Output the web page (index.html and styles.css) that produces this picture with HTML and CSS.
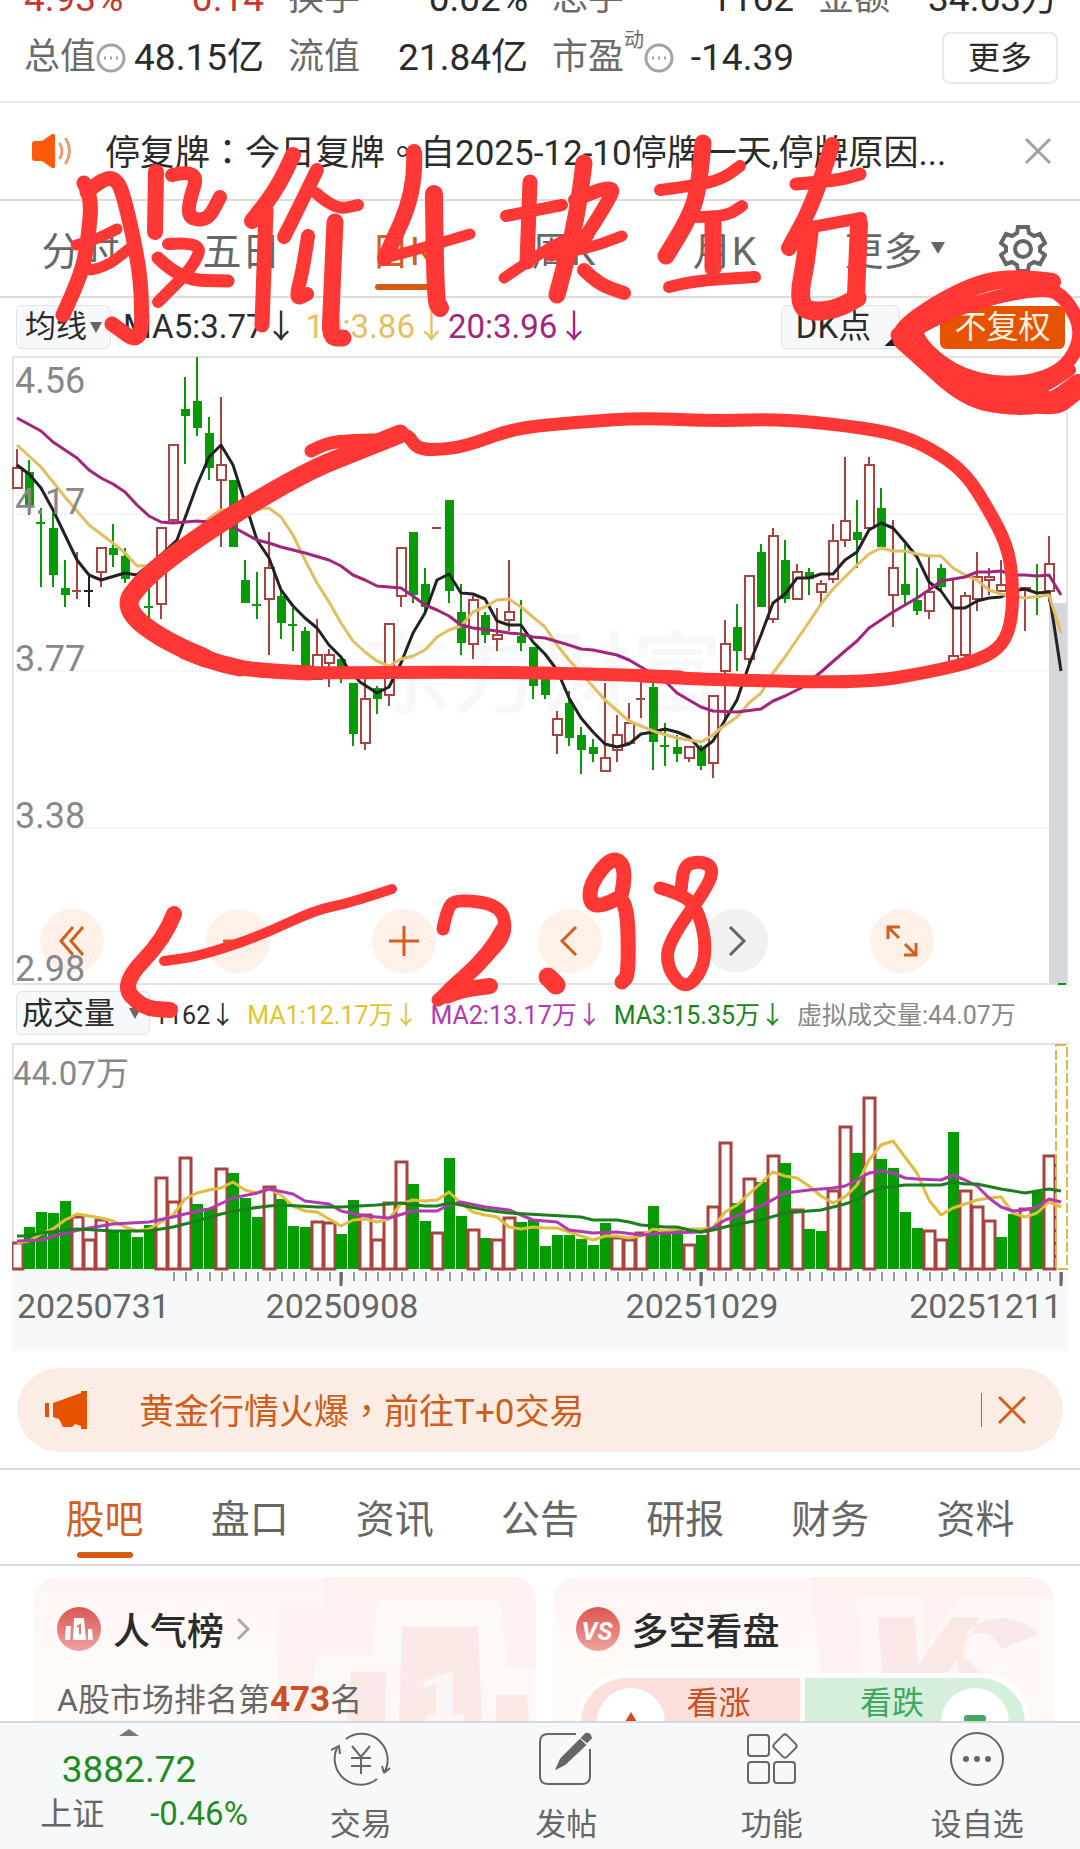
FILE: index.html
```html
<!DOCTYPE html>
<html lang="zh-CN">
<head>
  <meta charset="UTF-8" />
  <meta name="viewport" content="width=device-width, initial-scale=1.0" />
  <title>日K</title>
  <link rel="stylesheet" href="styles.css">
</head>
<body>
  <div class="app">
    <section class="stats">
      <div class="stat up"><span>4.93%</span><span>0.14</span></div>
      <div class="stat"><span class="name">换手</span><span>0.02%</span></div>
      <div class="stat"><span class="name">总手</span><span>1162</span></div>
      <div class="stat last"><span class="name">金额</span><span>34.63万</span></div>
      <div class="stat">
        <span class="name">总值<svg class="dots" viewBox="0 0 30 30"><circle cx="15" cy="15" r="13"/><path d="M8 15h2M14 15h2M20 15h2"/></svg></span>
        <span>48.15亿</span>
      </div>
      <div class="stat"><span class="name">流值</span><span>21.84亿</span></div>
      <div class="stat">
        <span class="name">市盈<sup>动</sup><svg class="dots" viewBox="0 0 30 30"><circle cx="15" cy="15" r="13"/><path d="M8 15h2M14 15h2M20 15h2"/></svg></span>
        <span>-14.39</span>
      </div>
      <div class="stat last"><button class="more">更多</button></div>
    </section>

    <section class="notice">
      <svg class="horn" viewBox="0 0 42 36"><path d="M1 11q0-3 3-3h7L21 1q3-1 3 2v30q0 3-3 2l-10-7H4q-3 0-3-3z" fill="#ff5a0a"/><path d="M29 11q4 7 0 14M35 6q7 12 0 24" fill="none" stroke="#f39a6c" stroke-width="3" stroke-linecap="round"/></svg>
      <p lang="zh-TW">停复牌：今日复牌。自2025-12-10停牌一天,停牌原因...</p>
      <button class="close" aria-label="关闭"><svg viewBox="0 0 28 28"><path d="M2 2l24 24M26 2L2 26"/></svg></button>
    </section>

    <nav class="periods">
      <div class="period-list">
        <a href="#">分时</a>
        <a href="#">五日</a>
        <a href="#" class="on">日K</a>
        <a href="#">周K</a>
        <a href="#">月K</a>
        <a href="#" class="others">更多<i class="caret"></i></a>
      </div>
      <button class="gear" aria-label="设置">
        <svg viewBox="0 0 48 48"><path d="M19 2h10l1 6 5 3 6-2 5 9-5 4v4l5 4-5 9-6-2-5 3-1 6H19l-1-6-5-3-6 2-5-9 5-4v-4l-5-4 5-9 6 2 5-3z"/><circle cx="24" cy="24" r="8"/></svg>
      </button>
    </nav>

    <section class="indicators">
      <label class="pick"><select aria-label="均线"><option>均线</option></select></label>
      <span class="ma5">MA5:3.77↓</span>
      <span class="ma10">10:3.86↓</span>
      <span class="ma20">20:3.96↓</span>
      <button class="dk">DK点</button>
      <button class="adjust">不复权</button>
    </section>

    <section class="price">
      <svg id="priceChart" class="chart" viewBox="12 6 1056 629"></svg>
      <div class="tools">
        <button aria-label="最早"><svg viewBox="0 0 32 32"><path d="M17 2L5 16l12 14M27 2L15 16l12 14"/></svg></button>
        <button aria-label="缩小"><svg viewBox="0 0 32 32"><path d="M1 16h30"/></svg></button>
        <button aria-label="放大"><svg viewBox="0 0 32 32"><path d="M1 16h30M16 1v30"/></svg></button>
        <button aria-label="左移"><svg viewBox="0 0 32 32"><path d="M22 2L8 16l14 14"/></svg></button>
        <button aria-label="右移" class="off"><svg viewBox="0 0 32 32"><path d="M10 2l14 14-14 14"/></svg></button>
        <button aria-label="全屏"><svg viewBox="0 0 32 32"><path d="M14 2H2v12M2 2l11 11M18 30h12V18M30 30L19 19"/></svg></button>
      </div>
    </section>

    <section class="volume-head">
      <label class="pick wide"><select aria-label="指标"><option>成交量</option></select></label>
      <span class="now">1162↓</span>
      <span class="v1">MA1:12.17万↓</span>
      <span class="v2">MA2:13.17万↓</span>
      <span class="v3">MA3:15.35万↓</span>
      <span class="v4">虚拟成交量:44.07万</span>
    </section>

    <section class="volume">
      <svg id="volumeChart" class="chart" viewBox="12 13 1056 308"></svg>
    </section>

    <section class="banner">
      <svg class="mega" viewBox="0 0 44 38"><path d="M0 12h4v14H0zM8 12L36 2V0h6v38h-6v-3l-6-2-3 3h-9l-4-8-6-2z"/></svg>
      <a href="#" lang="zh-TW">黄金行情火爆，前往T+0交易</a>
      <button class="close" aria-label="关闭"><svg viewBox="0 0 28 28"><path d="M1 1l26 26M27 1L1 27"/></svg></button>
    </section>

    <nav class="tabs">
      <a href="#" class="on">股吧</a>
      <a href="#">盘口</a>
      <a href="#">资讯</a>
      <a href="#">公告</a>
      <a href="#">研报</a>
      <a href="#">财务</a>
      <a href="#">资料</a>
    </nav>

    <main class="cards">
      <article class="card">
        <svg class="decor" viewBox="0 0 260 144" aria-hidden="true">
          <path d="M3 30h46V0h211v144H3z" fill="#fdf2f0"/>
          <path d="M39 78h58l4-55h124l6 67h29v54H36z" fill="#fef8f6"/>
          <path d="M126 50h76l4 94h-83zM75 95h35l-1 49H71zM220 118h31l2 26h-33z" fill="#fae9e7"/>
          <path d="M147 104l30-10v43h11v7h-38v-7h10v-30l-12 4z" fill="#fef6f4"/>
        </svg>
        <h2>
          <svg class="badge" viewBox="0 0 44 44"><defs><linearGradient id="red" x2="0" y2="1"><stop stop-color="#dc5550"/><stop offset="1" stop-color="#efa29e"/></linearGradient></defs><circle cx="22" cy="22" r="22" fill="url(#red)"/><path d="M17 11h10l2 22H16zM9 19h5l-1 14H8zM31 22h4l1 11h-5z" fill="#fff"/><path d="M20 20l3-2v9" fill="none" stroke="#de7370" stroke-width="2"/></svg>
          人气榜
          <svg class="arrow" viewBox="0 0 14 24"><path d="M2 2l10 10L2 22"/></svg>
        </h2>
        <p>A股市场排名第<b>473</b>名</p>
      </article>
      <article class="card">
        <svg class="decor" viewBox="0 0 260 144" aria-hidden="true">
          <path d="M16 0h244v144H34z" fill="#fdf2f0"/>
          <path d="M62 20h66l4 50 34-50h94v124H70z" fill="#fef7f5"/>
          <path d="M84 40h37l3 48 34-48h28l-58 104H92zM244 58q-15-20-46-16-34 6-27 38l22 22q30 14 24 42h-26q2-20-20-28l-10-36q2-22 24-24 14-1 22 16z" fill="#fbe9e8"/>
        </svg>
        <h2>
          <svg class="badge" viewBox="0 0 44 44"><circle cx="22" cy="22" r="22" fill="url(#red)"/><text x="21" y="33" class="vs">VS</text></svg>
          多空看盘
        </h2>
        <div class="vote">
          <button class="bull"><i><svg viewBox="0 0 24 20"><path d="M12 0l12 20H0z" fill="#d9491d"/></svg></i>看涨</button>
          <button class="bear">看跌<i><svg viewBox="0 0 24 20"><rect x="1" y="3" width="22" height="7" rx="3" fill="#3fa964"/></svg></i></button>
        </div>
      </article>
    </main>

    <footer class="bar">
      <a href="#" class="index">
        <i class="caret-up"></i>
        <strong>3882.72</strong>
        <span><em>上证</em>-0.46%</span>
      </a>
      <a href="#"><svg viewBox="0 0 60 60"><path d="M15 10a26 26 0 0 1 38 34M53 44l-2-7M53 44l6-5M46 50A26 26 0 0 1 6 19M0 21l8-4 1 8M21 17l9 11 9-11M30 28v17M20 29h20M20 37h20"/></svg>交易</a>
      <a href="#"><svg viewBox="0 0 60 60"><path d="M40 5H12q-8 0-8 8v34q0 8 8 8h34q8 0 8-8V20"/><path d="M21 39l4-9 19-19 5 5-20 19zM46 9l4-4q4-1 5 4l-4 4z" class="solid"/></svg>发帖</a>
      <a href="#"><svg viewBox="0 0 60 60"><rect x="6" y="6" width="21" height="21" rx="3"/><rect x="6" y="33" width="21" height="21" rx="3"/><rect x="32" y="33" width="21" height="21" rx="3"/><rect x="34" y="8" width="18" height="18" rx="3" transform="rotate(45 43 17)"/></svg>功能</a>
      <a href="#"><svg viewBox="0 0 60 60"><circle cx="30" cy="30" r="26"/><circle cx="19" cy="30" r="2" class="dot"/><circle cx="30" cy="30" r="2" class="dot"/><circle cx="41" cy="30" r="2" class="dot"/></svg>设自选</a>
    </footer>

    <!-- pen marks drawn over the page -->
    <svg class="marks" viewBox="0 0 1080 1849" role="img" aria-label="股价4块左右 2.98">
      <g id="pen"></g>
    </svg>
  </div>
  <script src="chart.js"></script>
</body>
</html>
```
FILE: styles.css
```css
* {
  box-sizing: border-box;
}
body {
  margin: 0;
  background: #fff;
  color: #2b2b2b;
  font-family: Roboto, "Noto Sans CJK SC", sans-serif;
}
button, select {
  font: inherit;
  color: inherit;
  border: 0;
  padding: 0;
  margin: 0;
  background: none;
}
a {
  color: inherit;
  text-decoration: none;
}
svg {
  display: block;
}
.app {
  position: relative;
  height: 100vh;
  display: flex;
  flex-direction: column;
  overflow: hidden;
}
.app > * {
  flex-shrink: 0;
}

/* quote figures */
.stats {
  display: grid;
  grid-template-columns: 264fr 264fr 266fr 240fr;
  margin-top: -31px;
  padding: 0 22px 14px 24px;
  font-size: 36px;
  line-height: 59px;
  border-bottom: 2px solid #ececee;
}
.stat {
  display: flex;
  height: 59px;
  justify-content: space-between;
  align-items: center;
  padding-right: 24px;
  font-size: 37px;
  white-space: nowrap;
}
.stat.last {
  padding-right: 0;
}
.stat.up {
  color: #c8352f;
}
.name {
  display: flex;
  align-items: center;
  font-size: 36px;
  color: #6b6b6b;
}
.name sup {
  font-size: 20px;
  line-height: 24px;
  align-self: flex-start;
}
.dots {
  width: 30px;
  height: 30px;
  fill: none;
  stroke: #a3a3a3;
  stroke-width: 3;
}
.more {
  width: 116px;
  height: 52px;
  margin-left: auto;
  font-size: 32px;
  line-height: 48px;
  border: 2px solid #e9e9eb;
  border-radius: 8px;
}

.notice {
  display: flex;
  align-items: center;
  height: 98px;
  padding: 0 28px 0 31px;
  border-bottom: 2px solid #dcdcdc;
  font-family: Roboto, "Noto Sans CJK TC", sans-serif;
  font-size: 35px;
}
.notice p {
  flex: 1;
  margin: 0 0 0 32px;
  padding-bottom: 4px;
  white-space: nowrap;
}
.horn {
  width: 42px;
  height: 36px;
}
.close svg {
  width: 28px;
  height: 28px;
  fill: none;
  stroke: #a0a0a0;
  stroke-width: 3;
}

.periods {
  display: flex;
  height: 97px;
  border-bottom: 2px solid #dcdcdc;
  font-size: 39px;
  color: #666;
}
.period-list {
  flex: 1;
  display: grid;
  grid-template-columns: repeat(6, 1fr);
}
.period-list a {
  position: relative;
  display: flex;
  align-items: center;
  justify-content: center;
  padding-bottom: 2px;
  white-space: nowrap;
}
.period-list .others {
  padding-left: 18px;
}
.on {
  color: #d2601a;
}
.period-list .on::after, .tabs .on::after {
  content: "";
  position: absolute;
  left: calc(50% - 28px);
  bottom: 6px;
  width: 56px;
  height: 6px;
  border-radius: 3px;
  background: #d65a14;
}
.caret {
  margin-left: 8px;
  border: 7px solid transparent;
  border-top: 12px solid #666;
  border-bottom: 0;
}
.gear {
  width: 114px;
  display: flex;
  align-items: center;
  justify-content: center;
}
.gear svg {
  width: 48px;
  height: 48px;
  fill: none;
  stroke: #666;
  stroke-width: 4;
}

.indicators {
  display: flex;
  align-items: center;
  height: 58px;
  padding: 0 16px;
  font-size: 33px;
  line-height: 40px;
  white-space: nowrap;
}
.pick {
  display: flex;
  align-items: center;
  justify-content: space-between;
  width: 95px;
  height: 44px;
  padding: 0 8px;
  font-size: 31px;
  border: 1px solid #dfe2e6;
  border-radius: 6px;
  background: #f6f8fa;
}
.pick select {
  appearance: none;
}
.pick::after {
  content: "";
  border: 6px solid transparent;
  border-top: 11px solid #666;
  border-bottom: 0;
}
.ma5 {
  margin-left: 12px;
}
.ma10 {
  margin-left: 8px;
  color: #e8be62;
}
.ma20 {
  color: #a3247c;
}
.dk {
  width: 119px;
  height: 44px;
  margin: 0 40px 0 auto;
  padding-right: 14px;
  border: 1px solid #dfe2e6;
  border-radius: 6px;
  background: linear-gradient(135deg, transparent 50%, #222 50%) 103px 28px / 12px 12px no-repeat #f6f8fa;
}
.adjust {
  width: 125px;
  height: 43px;
  margin-right: -1px;
  font-size: 32px;
  line-height: 43px;
  border-radius: 6px;
  background: #e65300;
  color: #fff3e0;
}

/* charts */
.price {
  position: relative;
  margin: 0 12px;
}
.chart {
  position: relative;
  z-index: 1;
  width: 100%;
  height: auto;
  pointer-events: none;
}
.chart text {
  font-size: 36px;
  fill: #888;
}
.chart .amount {
  font-size: 33px;
}
.chart .date {
  font-size: 34px;
  fill: #666;
}
.chart .mark {
  font-size: 90px;
  font-weight: 500;
  fill: #f8f8f8;
}
.tools {
  position: absolute;
  left: 28px;
  bottom: 12px;
  display: flex;
  gap: 102px;
}
.tools button {
  width: 64px;
  height: 64px;
  border-radius: 50%;
  background: #fff0e8;
}
.tools svg {
  width: 32px;
  height: 32px;
  margin: auto;
  fill: none;
  stroke: #d2601a;
  stroke-width: 3;
}
.tools .off {
  background: #f1f1f1;
}
.tools .off svg {
  stroke: #666;
}
.volume-head {
  display: flex;
  align-items: center;
  height: 58px;
  padding: 0 16px 2px;
  font-size: 25px;
  white-space: nowrap;
}
.pick.wide {
  width: 134px;
  padding: 0 8px 0 5px;
}
.now {
  margin-left: 4px;
}
.v1 {
  margin-left: 12px;
  color: #e6c22e;
}
.v2 {
  margin-left: 12px;
  color: #b437b4;
}
.v3 {
  margin-left: 12px;
  color: #17861a;
}
.v4 {
  margin-left: 12px;
  color: #888;
}
.volume {
  margin: 0 12px;
}

.banner {
  display: flex;
  align-items: center;
  height: 84px;
  margin: 17px 17px 16px;
  padding: 0 37px 0 28px;
  border-radius: 42px;
  background: #fcede4;
  color: #cf5d1c;
  font-family: Roboto, "Noto Sans CJK TC", sans-serif;
  font-size: 35px;
}
.banner a {
  flex: 1;
  margin-left: 50px;
  padding-bottom: 4px;
}
.mega {
  width: 44px;
  height: 38px;
  fill: #e65300;
}
.banner .close {
  padding-left: 16px;
  border-left: 1px solid #d2601a;
  height: 34px;
}
.banner .close svg {
  stroke: #d2601a;
}

.tabs {
  display: flex;
  height: 98px;
  padding: 0 32px;
  border-top: 2px solid #dadada;
  border-bottom: 2px solid #dadada;
  font-size: 39px;
  color: #666;
}
.tabs a {
  position: relative;
  flex: 1;
  display: flex;
  align-items: center;
  justify-content: center;
  padding-bottom: 2px;
}
.tabs .on {
  color: #d2601a;
}

.cards {
  flex: 1 1 0;
  min-height: 0;
  display: flex;
  gap: 17px;
  padding: 11px 26px 0 34px;
  overflow: hidden;
}
.card {
  position: relative;
  flex: 1;
  height: 230px;
  padding: 28px 24px 0 23px;
  border-radius: 24px;
  background: linear-gradient(#fef6f4, #fffaf8 50%);
  overflow: hidden;
}
.card > * {
  position: relative;
}
.card .decor {
  position: absolute;
  right: 0;
  top: 0;
  width: 260px;
  height: 144px;
}
.card h2 {
  display: flex;
  align-items: center;
  gap: 12px;
  margin: 0;
  height: 48px;
  font-size: 37px;
  font-weight: 500;
}
.badge {
  width: 44px;
  height: 44px;
}
.vs {
  font: italic 700 25px Roboto, sans-serif;
  text-anchor: middle;
  fill: #fff;
}
.arrow {
  width: 14px;
  height: 24px;
  fill: none;
  stroke: #aaa;
  stroke-width: 3;
}
.card p {
  margin: 24px 0 0;
  font-size: 32px;
  line-height: 46px;
  color: #666;
}
.card b {
  font-size: 35px;
  color: #c94f25;
}
.vote {
  display: flex;
  gap: 5px;
  height: 100px;
  margin: 20px 0 0;
  border: 5px solid #fff;
  border-radius: 50px;
  overflow: hidden;
  font-size: 32px;
}
.vote button {
  flex: 1;
  display: flex;
  align-items: flex-start;
  line-height: 50px;
}
.bull {
  background: #fcdedb;
  color: #c94f25;
  gap: 22px;
  padding-left: 16px;
}
.bear {
  background: #d6efdc;
  color: #3fa964;
  gap: 17px;
  justify-content: flex-end;
  padding-right: 16px;
}
.vote i {
  width: 68px;
  height: 68px;
  margin-top: 10px;
  padding-top: 24px;
  border-radius: 50%;
  background: #fff;
}
.vote i svg {
  width: 24px;
  height: 20px;
  margin: auto;
}

.bar {
  display: flex;
  height: 128px;
  border-top: 2px solid #d6d8da;
  background: #f7f8fa;
  color: #666;
  font-size: 31px;
  line-height: 44px;
}
.bar a {
  flex: 1;
  display: flex;
  flex-direction: column;
  align-items: center;
  padding-top: 6px;
}
.bar a > svg {
  width: 60px;
  height: 60px;
  margin-bottom: 14px;
  fill: none;
  stroke: #666;
  stroke-width: 2;
}
.bar .solid, .bar .dot {
  fill: #666;
}
.bar .index {
  flex: 0 0 258px;
  color: #1f8e22;
}
.caret-up {
  border: 10px solid transparent;
  border-bottom: 7px solid #777;
  border-top: 0;
}
.index strong {
  margin-top: 12px;
  font-size: 37px;
  font-weight: 400;
}
.index span {
  display: flex;
  gap: 46px;
  margin-left: 30px;
  font-size: 33px;
}
.index em {
  font-style: normal;
  font-size: 32px;
  color: #666;
}

.marks {
  position: absolute;
  z-index: 2;
  left: 0;
  top: 0;
  width: 100%;
  pointer-events: none;
  fill: none;
  stroke: #ff3735;
  stroke-linecap: round;
  stroke-linejoin: round;
}
```
FILE: chart.js
```js
const RED = "#a8433f";
const GREEN = "#079b07";
const x = (i) => 17 + i * 12;

// kind, high, body top, body bottom, low
const candles = [
  ["r",99,117,138,138],["g",110,122,155,165],["g",158,173,174,237],["g",163,178,225,237],["g",210,238,245,257],
  ["r",202,241,242,249],["k",225,241,242,257],["r",197,197,222,237],["g",174,198,205,217],["g",198,206,229,233],
  ["g",225,228,238,245],["g",235,257,258,270],["r",177,177,254,269],["r",94,94,170,172],["g",27,59,66,114],
  ["g",7,51,78,86],["g",67,83,118,130],["r",47,114,130,197],["g",130,130,197,197],["g",210,230,253,253],
  ["g",222,255,256,269],["r",182,217,249,305],["g",241,246,273,289],["g",258,275,276,301],["g",277,281,316,316],
  ["r",269,304,329,329],["r",299,304,313,337],["g",307,309,322,333],["g",333,333,384,396],["r",325,348,393,400],
  ["g",336,338,349,364],["r",273,273,345,356],["r",197,197,246,257],["g",182,182,245,253],["g",218,234,257,262],
  ["r",178,178,178,178],["g",150,150,241,253],["g",234,262,293,305],["r",246,249,294,309],["g",262,265,285,293],
  ["r",258,284,289,301],["r",210,261,270,281],["g",250,286,293,301],["g",297,297,336,349],["g",325,325,345,349],
  ["r",361,368,385,404],["g",341,353,388,396],["g",377,385,400,424],["g",389,397,404,412],["r",333,407,421,421],
  ["r",365,384,400,412],["r",353,372,393,393],["r",329,349,349,368],["g",330,337,392,420],["g",373,396,397,416],
  ["g",385,397,404,412],["r",396,396,408,412],["g",395,397,416,420],["r",345,345,413,428],["r",270,293,321,370],
  ["g",254,277,301,321],["r",225,225,309,315],["g",194,202,257,257],["r",178,185,269,273],["g",190,210,249,253],
  ["r",214,221,249,249],["g",218,222,229,245],["r",230,233,242,253],["r",174,190,229,233],["r",107,170,190,197],
  ["g",150,182,190,218],["r",107,114,178,178],["g",138,158,197,197],["r",170,217,245,277],["g",194,234,245,254],
  ["g",218,250,261,265],["r",207,241,261,269],["g",214,218,237,241],["r",230,305,318,318],["r",242,245,305,318],
  ["r",202,226,249,261],["r",218,226,230,245],["r",210,234,241,241],["g",230,235,245,245],["r",237,237,240,281],
  ["g",214,247,249,265],["r",186,213,241,252]
];

const ma5 = "17,115 29,124 41,138 53,160 77,210 89,225 101,230 125,223 137,225 161,205 177,190 197,135 209,107 221,95 233,115 249,165 257,190 269,208 281,240 293,256 305,268 317,278 329,295 341,307 347,317 360,332 377,343 389,337 401,313 413,283 425,263 437,230 449,224 461,243 473,244 485,249 497,271 509,275 521,275 533,292 545,304 557,320 569,348 581,368 593,382 605,394 617,397 629,394 641,384 653,382 665,379 677,382 689,387 701,400 713,391 725,370 737,350 749,315 761,285 773,253 785,244 797,228 809,228 821,224 833,224 845,210 857,202 869,180 881,173 893,178 905,192 917,207 929,232 941,241 953,258 965,258 977,251 989,248 1001,247 1013,241 1025,239 1037,243 1049,242 1061,321";
const ma10 = "17,95 41,117 65,147 89,175 113,193 125,203 137,216 161,215 185,190 209,168 221,160 245,160 269,158 281,167 293,185 305,210 317,233 329,252 341,273 353,291 365,302 377,311 389,316 401,309 413,306 425,300 437,287 449,280 461,276 473,262 485,257 497,250 509,249 521,257 533,267 545,277 557,295 569,310 581,323 605,350 629,371 653,381 677,388 701,392 713,385 721,378 737,367 749,353 761,343 773,323 785,307 809,272 821,254 833,239 845,227 857,215 869,204 881,198 893,201 905,201 917,204 929,206 941,206 953,218 965,225 977,230 989,240 1001,244 1025,248 1049,245 1061,283";
const ma20 = "17,68 41,81 53,92 77,108 89,120 101,128 113,134 125,142 137,155 149,166 161,172 173,173 197,171 209,172 233,177 257,190 269,193 281,197 305,203 329,210 341,216 353,225 365,230 377,236 401,238 413,246 425,255 437,260 449,266 461,275 473,278 497,281 509,283 521,284 533,287 545,288 569,295 581,299 593,300 617,305 629,310 641,317 665,331 677,343 689,350 701,357 713,361 737,362 761,359 773,351 785,346 801,338 821,322 845,301 857,291 869,278 893,262 917,248 929,240 941,231 953,229 965,227 977,222 989,222 1001,221 1013,225 1025,225 1037,226 1049,225 1061,245";

const line = (points, color) =>
  `<polyline points="${points}" fill="none" stroke="${color}" stroke-width="3" stroke-linejoin="round"/>`;

function drawPrice() {
  let s = `<path d="M12 7H1068M13 7V634M1067 7V634M12 634H1068" stroke="#e2e2e4" stroke-width="2"/>`;
  s += `<path d="M12 164H1068M12 321H1068M12 478H1068" stroke="#e4e4e4" stroke-dasharray="2 2"/>`;
  s += `<text class="mark" x="362" y="356">东方财富</text>`;
  s += `<rect x="1049" y="253" width="18" height="381" fill="#d4d8dd"/><path d="M1058 634h8" stroke="${GREEN}" stroke-width="2"/>`;
  candles.forEach(([kind, high, top, bottom, low], i) => {
    const c = kind === "r" ? RED : kind === "g" ? GREEN : "#222";
    const h = bottom - top;
    if (h < 3) {
      s += `<path d="M${x(i)} ${high}V${low}M${x(i) - 5} ${top}h9" stroke="${c}" stroke-width="2"/>`;
    } else if (kind === "r") {
      s += `<path d="M${x(i)} ${high}V${top}M${x(i)} ${bottom}V${low}" stroke="${c}" stroke-width="2"/>`;
      s += `<rect x="${x(i) - 4}" y="${top + 1}" width="9" height="${h - 1}" fill="#fff" stroke="${c}" stroke-width="2"/>`;
    } else {
      s += `<path d="M${x(i)} ${high}V${low}" stroke="${c}" stroke-width="2"/>`;
      s += `<rect x="${x(i) - 4}" y="${top}" width="9" height="${h}" fill="${c}"/>`;
    }
  });
  s += line(ma5, "#222") + line(ma10, "#e2bd62") + line(ma20, "#a3247c");
  [["4.56", 43], ["4.17", 164], ["3.77", 321], ["3.38", 478], ["2.98", 631]].forEach(([t, y]) => {
    s += `<text x="15" y="${y}">${t}</text>`;
  });
  document.getElementById("priceChart").innerHTML = s;
}

const volumes = [212,197,182,183,171,186,209,189,200,201,207,195,147,171,127,174,178,138,143,168,187,156,169,196,197,191,192,204,170,184,209,172,131,154,191,202,128,186,199,208,209,187,192,190,216,205,205,209,215,193,207,209,202,176,200,199,214,205,176,112,173,148,152,125,133,179,199,201,160,96,123,67,129,138,182,198,200,209,102,160,176,190,207,184,178,162,125];
const volumeKinds = "rggggrrrggggrrrggrgggrgggrrggrrrrggrggrgrrgggggggg" + "rrrgggrgrrgrgrgrggrrgrggggrrgrrrggrgr";
const v1 = [213,211,204,199,190,184,186,188,191,197,201,199,192,185,169,163,160,158,152,160,163,159,165,176,181,182,189,196,190,189,192,189,174,170,171,170,162,173,182,185,187,197,199,197,198,198,202,206,210,206,206,208,206,199,201,199,199,199,198,182,175,164,153,142,146,148,156,166,173,167,155,130,115,111,127,143,170,185,178,174,170,168,167,183,187,183,172,177];
const v2 = {0:211,2:210,4:203,6:198,8:194,11:192,13:187,14:184,16:179,18:168,20:163,21:159,23:164,24:171,26:174,27:181,29:186,31:188,33:181,35:181,36:175,37:172,39:177,41:180,43:190,44:191,45:192,46:200,48:203,50:202,52:205,54:203,57:202,58:198,59:190,60:186,62:176,64:163,66:160,68:158,69:156,70:150,71:143,72:141,73:143,74:148,75:149,77:150,78:145,79:150,80:156,81:168,82:177,83:181,84:180,85:177,86:169,87:172};
const v3 = {0:206,1:206,2:203,5:199,8:201,11:201,13:197,15:191,17:184,19:179,21:176,22:175,25:177,27:177,30:175,32:173,34:176,35:176,36:173,37:175,39:180,41:183,44:185,47:187,48:190,50:190,51:192,52:195,54:197,55:197,56:200,57:202,58:200,60:194,62:190,64:183,67:180,69:174,70:170,71:162,72:158,74:155,77:155,78:152,79:154,80:154,82:159,84:163,86:159,87:161};

function drawVolume() {
  let s = `<rect x="12" y="240" width="1056" height="81" fill="#f7f8fa"/>`;
  s += `<path d="M12 14H1068M13 14V240" stroke="#e2e2e4" stroke-width="2"/>`;
  volumes.forEach((top, i) => {
    if (volumeKinds[i] === "r") {
      s += `<rect x="${x(i) - 5}" y="${top + 1}" width="11" height="${238 - top}" fill="#fff" stroke="${RED}" stroke-width="3"/>`;
    } else {
      s += `<rect x="${x(i) - 5}" y="${top}" width="11" height="${239 - top}" fill="#049d04"/>`;
    }
  });
  s += `<rect x="1056" y="15" width="11" height="224" fill="none" stroke="#e0b84a" stroke-width="2" stroke-dasharray="10 3"/>`;
  const points = (v) => Object.entries(v).map(([i, y]) => `${x(i)},${y}`).join(" ");
  s += line(points(v1), "#e0bd3c") + line(points(v2), "#b437b4") + line(points(v3), "#1a7f1c");
  for (let i = 13; i < 88; i++) {
    s += `<path d="M${x(i) + 1} 242v9" stroke="#999" stroke-width="2"/>`;
  }
  [27, 57, 87].forEach((i) => {
    s += `<path d="M${x(i)} 242v14" stroke="#666" stroke-width="3"/>`;
  });
  s += `<text class="amount" x="13" y="55">44.07万</text>`;
  s += `<text class="date" x="17" y="288">20250731</text>`;
  s += `<text class="date" x="342" y="288" text-anchor="middle">20250908</text>`;
  s += `<text class="date" x="702" y="288" text-anchor="middle">20251029</text>`;
  s += `<text class="date" x="1062" y="288" text-anchor="end">20251211</text>`;
  document.getElementById("volumeChart").innerHTML = s;
}

// stroke width, points
const strokes = [
  [15, "84,183 92,196 88,240 82,272 63,315"], [15, "87,192 104,177 118,180 126,205 138,260 142,300 141,345 112,324"],
  [11, "76,245 95,240 117,229"], [11, "90,270 105,268 130,248"],
  [16, "156,172 155,232"], [14, "172,175 200,168 188,205 190,219 208,220 220,197"],
  [12, "168,244 202,241 195,265 158,302"], [13, "158,258 180,280 228,281"],
  [16, "293,155 280,185 252,221"], [15, "266,210 262,325"], [14, "317,170 300,205 284,237"],
  [12, "316,193 335,210 358,205"], [14, "308,236 303,270 295,300 307,294"], [17, "335,222 331,310 330,338 343,338"],
  [16, "414,152 416,190 385,258"], [11, "385,258 430,246 470,234"], [18, "434,194 435,300 440,308"],
  [12, "506,216 562,205"], [15, "530,182 527,262"], [11, "504,278 545,250 565,240"],
  [17, "584,163 578,215 557,295"], [14, "575,200 619,180 603,210 580,245"], [11, "550,256 590,248 622,236"], [14, "584,270 598,284 624,293"],
  [12, "660,190 700,185 724,178 740,166"], [17, "703,143 699,190 688,220 666,256"], [12, "697,217 725,217 742,206"],
  [17, "713,219 713,268"], [12, "669,287 690,281 755,277"],
  [13, "796,184 835,181 860,174"], [16, "832,145 815,200 789,248"], [12, "812,227 861,218"], [19, "809,232 806,260 799,295 805,312 835,310 857,298"], [18, "859,224 856,295"],
  [18, "1052,282 1010,276 960,290 893,333 915,352 965,398 1010,407 1050,404 1078,383"],
  [14, "905,336 950,308 1045,286 1068,300 1084,335 1062,374 1005,386 950,372 910,333 930,312"],
  [18, "962,384 1047,414 1078,390"], [15, "898,335 950,380 1010,397 1045,397"], [12, "1000,402 1040,390 1070,370"],
  [13, "311,451 325,443 355,440 385,440 407,432 417,450 450,449 475,443 515,428 580,422 640,418 720,421 780,419 850,426 897,434 930,448 965,472 990,512 1007,545 1013,580 1012,620 1003,645 980,660 930,672 865,683 720,680 640,676"],
  [13, "680,677 600,674 480,672 300,673 260,671"], [15, "310,673 260,671 220,664"],
  [17, "240,668 220,664 185,651"],
  [19, "205,658 165,642 122,608 143,580 180,550 240,510 310,470 355,452 400,434"],
  [10, "392,889 350,903 315,910 260,936 200,956 164,961"], [16, "174,914 165,938 121,984 142,1008 170,1010"],
  [13, "443,929 447,908 457,899 500,905 507,930 495,950 438,1000"], [16, "503,930 490,955 438,1000 460,990 490,986"],
  [19, "548,977 556,985"],
  [15, "622,892 627,868 612,856 590,884 590,904 603,906 627,893 629,975 622,982"],
  [13, "660,888 678,893 696,905 706,940 703,970 685,990 667,968 668,942 709,885 713,867 700,861 684,865 681,890"]
];

// round the corners by running curves through the midpoints
function smooth(points) {
  const p = points.split(" ").map((v) => v.split(",").map(Number));
  let d = `M${p[0]}`;
  for (let i = 1; i < p.length - 1; i++) {
    d += `Q${p[i]} ${(p[i][0] + p[i + 1][0]) / 2},${(p[i][1] + p[i + 1][1]) / 2}`;
  }
  return d + `L${p[p.length - 1]}`;
}

drawPrice();
drawVolume();
document.getElementById("pen").innerHTML = strokes
  .map(([w, p]) => `<path d="${smooth(p)}" stroke-width="${w}"/>`)
  .join("");
```
